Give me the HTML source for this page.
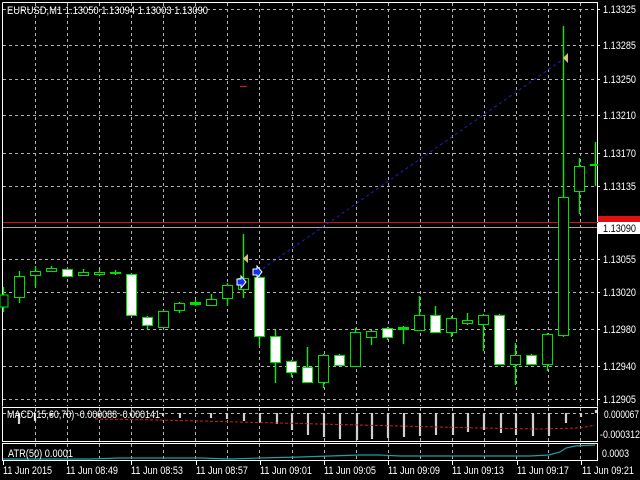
<!DOCTYPE html>
<html><head><meta charset="utf-8"><style>
html,body{margin:0;padding:0;background:#000;width:640px;height:480px;overflow:hidden}
svg{display:block}
text{font-family:"Liberation Sans",sans-serif;font-size:11px;fill:#fff}
</style></head><body>
<svg width="640" height="480" viewBox="0 0 640 480" xmlns="http://www.w3.org/2000/svg">
<rect width="640" height="480" fill="#000"/>
<g stroke="#b0b0b0" stroke-width="1" stroke-dasharray="3,3" shape-rendering="crispEdges">
<path d="M35.5 3V406M67.5 3V406M99.5 3V406M131.5 3V406M163.5 3V406M195.5 3V406M227.5 3V406M259.5 3V406M292.5 3V406M324.5 3V406M356.5 3V406M388.5 3V406M420.5 3V406M452.5 3V406M484.5 3V406M516.5 3V406M548.5 3V406M580.5 3V406"/>
<path d="M3 9.5H597M3 45.5H597M3 79.5H597M3 115.5H597M3 153.5H597M3 186.5H597M3 259.5H597M3 292.5H597M3 329.5H597M3 366.5H597M3 399.5H597"/>
<path d="M35.5 408V441M67.5 408V441M99.5 408V441M131.5 408V441M163.5 408V441M195.5 408V441M227.5 408V441M259.5 408V441M292.5 408V441M324.5 408V441M356.5 408V441M388.5 408V441M420.5 408V441M452.5 408V441M484.5 408V441M516.5 408V441M548.5 408V441M580.5 408V441M3 413.5H597"/>
<path d="M35.5 444V460M67.5 444V460M99.5 444V460M131.5 444V460M163.5 444V460M195.5 444V460M227.5 444V460M259.5 444V460M292.5 444V460M324.5 444V460M356.5 444V460M388.5 444V460M420.5 444V460M452.5 444V460M484.5 444V460M516.5 444V460M548.5 444V460M580.5 444V460"/>
</g>
<g stroke="#fff" fill="none" shape-rendering="crispEdges">
<path d="M2.5 2.5H597.5V406.5M2.5 2.5V406.5"/>
<rect x="2.5" y="407.5" width="595" height="34"/>
<rect x="2.5" y="443.5" width="595" height="17"/>
</g>
<line x1="3" y1="222.5" x2="640" y2="222.5" stroke="#d01010"/>
<line x1="3" y1="227.5" x2="597" y2="227.5" stroke="#a0a8b0"/>
<line x1="258" y1="272" x2="565" y2="58" stroke="#2020c0" stroke-dasharray="3,3"/>
<line x1="240" y1="86.5" x2="247" y2="86.5" stroke="#c02020" stroke-width="1.2"/>
<path fill="none" stroke="#00f000" stroke-width="1.4" d="M3.5 287V312M19.5 271V303M35.5 266V287M51.5 266V271M67.5 268V277M83.5 269V276M99.5 270V276M115.5 270V275M131.5 273V316M147.5 316V329M163.5 310V328M179.5 302V313M195.5 300V306M211.5 294V306M227.5 283V306M243.5 234V298M259.5 276V346M275.5 330V383M291.5 360V377M307.5 347V383M323.5 354V388M339.5 354V366M355.5 328V367M371.5 330V345M387.5 327V340M403.5 326V344M419.5 296V331M435.5 306V332M451.5 316V337M467.5 313V325M483.5 314V351M499.5 314V364M515.5 343V385M531.5 354V365M547.5 333V371M563.5 26V337M579.5 158V214M595.5 142V186"/>
<g stroke="#00e000" stroke-width="1.2" fill="#000" shape-rendering="crispEdges">
<rect x="0" y="295" width="8" height="12"/>
<rect x="14.5" y="276.5" width="10" height="21"/>
<rect x="30.5" y="271.5" width="10" height="4"/>
<rect x="46.5" y="268.5" width="10" height="3"/>
<rect x="78.5" y="272.5" width="10" height="3"/>
<rect x="94.5" y="272.5" width="10" height="2"/>
<rect x="110.5" y="272.5" width="10" height="1" fill="#00e000"/>
<rect x="158.5" y="311.5" width="10" height="16"/>
<rect x="174.5" y="303.5" width="10" height="7"/>
<rect x="190.5" y="302.5" width="10" height="2" fill="#00e000"/>
<rect x="206.5" y="299.5" width="10" height="6"/>
<rect x="222.5" y="285.5" width="10" height="13"/>
<rect x="238.5" y="278.5" width="10" height="11"/>
<rect x="318.5" y="355.5" width="10" height="27"/>
<rect x="350.5" y="332.5" width="10" height="34"/>
<rect x="366.5" y="331.5" width="10" height="6"/>
<rect x="398.5" y="327.5" width="10" height="2" fill="#00e000"/>
<rect x="414.5" y="315.5" width="10" height="15"/>
<rect x="446.5" y="318.5" width="10" height="14"/>
<rect x="462.5" y="320.5" width="10" height="3"/>
<rect x="478.5" y="315.5" width="10" height="9"/>
<rect x="510.5" y="355.5" width="10" height="9"/>
<rect x="542.5" y="334.5" width="10" height="30"/>
<rect x="558.5" y="197.5" width="10" height="138"/>
<rect x="574.5" y="166.5" width="10" height="25"/>
<rect x="590.5" y="164.5" width="7" height="1" fill="#00e000"/>
</g>
<g stroke="#00e000" stroke-width="1.2" fill="#fff" shape-rendering="crispEdges">
<rect x="62.5" y="269.5" width="10" height="7"/>
<rect x="126.5" y="274.5" width="10" height="41"/>
<rect x="142.5" y="317.5" width="10" height="8"/>
<rect x="254.5" y="277.5" width="10" height="59"/>
<rect x="270.5" y="336.5" width="10" height="26"/>
<rect x="286.5" y="361.5" width="10" height="11"/>
<rect x="302.5" y="367.5" width="10" height="15"/>
<rect x="334.5" y="355.5" width="10" height="10"/>
<rect x="382.5" y="328.5" width="10" height="9"/>
<rect x="430.5" y="315.5" width="10" height="17"/>
<rect x="494.5" y="315.5" width="10" height="49"/>
<rect x="526.5" y="355.5" width="10" height="9"/>
</g>
<g fill="#1030ff" stroke="#fff" stroke-width="1">
<path d="M237 279h4v-3l5 6-5 6v-3h-4z"/>
<path d="M253 269h4v-3l5 6-5 6v-3h-4z"/>
</g>
<g fill="#e0c070">
<path d="M248 254v9l-5-4.5z"/>
<path d="M568 53v10l-5-5z"/>
</g>
<rect x="598" y="216" width="42" height="8" fill="#e01010"/>
<rect x="598" y="222" width="42" height="12" fill="#fff"/>
<text x="603" y="232" textLength="33" lengthAdjust="spacingAndGlyphs" style="fill:#000">1.13090</text>
<g>
<text x="603" y="13" textLength="33" lengthAdjust="spacingAndGlyphs">1.13325</text>
<text x="603" y="49" textLength="33" lengthAdjust="spacingAndGlyphs">1.13285</text>
<text x="603" y="83" textLength="33" lengthAdjust="spacingAndGlyphs">1.13250</text>
<text x="603" y="119" textLength="33" lengthAdjust="spacingAndGlyphs">1.13210</text>
<text x="603" y="157" textLength="33" lengthAdjust="spacingAndGlyphs">1.13170</text>
<text x="603" y="190" textLength="33" lengthAdjust="spacingAndGlyphs">1.13135</text>
<text x="603" y="263" textLength="33" lengthAdjust="spacingAndGlyphs">1.13055</text>
<text x="603" y="296" textLength="33" lengthAdjust="spacingAndGlyphs">1.13020</text>
<text x="603" y="333" textLength="33" lengthAdjust="spacingAndGlyphs">1.12980</text>
<text x="603" y="370" textLength="33" lengthAdjust="spacingAndGlyphs">1.12940</text>
<text x="603" y="403" textLength="33" lengthAdjust="spacingAndGlyphs">1.12905</text>
<text x="604" y="418" textLength="35" lengthAdjust="spacingAndGlyphs">0.000067</text>
<text x="600" y="438" textLength="40" lengthAdjust="spacingAndGlyphs">-0.000312</text>
<text x="602" y="457" textLength="27" lengthAdjust="spacingAndGlyphs">0.0003</text>
</g>
<g stroke="#fff" shape-rendering="crispEdges"><path d="M597 9.5h3M597 45.5h3M597 79.5h3M597 115.5h3M597 153.5h3M597 186.5h3M597 259.5h3M597 292.5h3M597 329.5h3M597 366.5h3M597 399.5h3"/></g>
<g stroke="#d0d0d0" stroke-width="2.2">
<path d="M19 413V424M35 413V421M51 413V416M67 413V415M99 413V416M131 413V416M163 413V416M180 413V418M211 413V418M227 413V419M244 413V421M260 413V422M277 413V424M292 413V430M308 413V435M324 413V437M340 413V439M357 413V440M372 413V439M388 413V438M404 413V437M420 413V436M436 413V435M453 413V435M468 413V432M484 413V430M501 413V433M516 413V435M533 413V436M549 413V436M566 413V423M581 413V417M596 410V413"/>
</g>
<polyline points="95,419 160,420 240,422 320,424 400,426 480,428 540,429 580,428 595,425" fill="none" stroke="#d02020" stroke-dasharray="3,2"/>
<text x="7" y="418" textLength="153" lengthAdjust="spacingAndGlyphs">MACD(15,60,70) -0.000088 -0.000141</text>
<polyline points="3,459 90,459 120,458 200,458 230,459 260,458 300,457 330,456 360,455 380,455 400,456 430,456 460,456 500,456 530,456 549,455 560,452 566,448 575,446 595,445" fill="none" stroke="#20a0a0" stroke-width="1.2"/>
<text x="8" y="457" textLength="65" lengthAdjust="spacingAndGlyphs">ATR(50) 0.0001</text>
<g stroke="#fff" shape-rendering="crispEdges"><path d="M3.5 461v4M67.5 461v4M131.5 461v4M196.5 461v4M260.5 461v4M324.5 461v4M388.5 461v4M452.5 461v4M517.5 461v4M581.5 461v4"/></g>
<g>
<text x="3" y="474" textLength="49" lengthAdjust="spacingAndGlyphs">11 Jun 2015</text>
<text x="66" y="474" textLength="52" lengthAdjust="spacingAndGlyphs">11 Jun 08:49</text>
<text x="131" y="474" textLength="52" lengthAdjust="spacingAndGlyphs">11 Jun 08:53</text>
<text x="196" y="474" textLength="52" lengthAdjust="spacingAndGlyphs">11 Jun 08:57</text>
<text x="260" y="474" textLength="52" lengthAdjust="spacingAndGlyphs">11 Jun 09:01</text>
<text x="324" y="474" textLength="52" lengthAdjust="spacingAndGlyphs">11 Jun 09:05</text>
<text x="388" y="474" textLength="52" lengthAdjust="spacingAndGlyphs">11 Jun 09:09</text>
<text x="452" y="474" textLength="52" lengthAdjust="spacingAndGlyphs">11 Jun 09:13</text>
<text x="517" y="474" textLength="52" lengthAdjust="spacingAndGlyphs">11 Jun 09:17</text>
<text x="582" y="474" textLength="52" lengthAdjust="spacingAndGlyphs">11 Jun 09:21</text>
</g>
<text x="7" y="14" textLength="201" lengthAdjust="spacingAndGlyphs">EURUSD,M1  1.13050 1.13094 1.13003 1.13090</text>
</svg>
</body></html>
